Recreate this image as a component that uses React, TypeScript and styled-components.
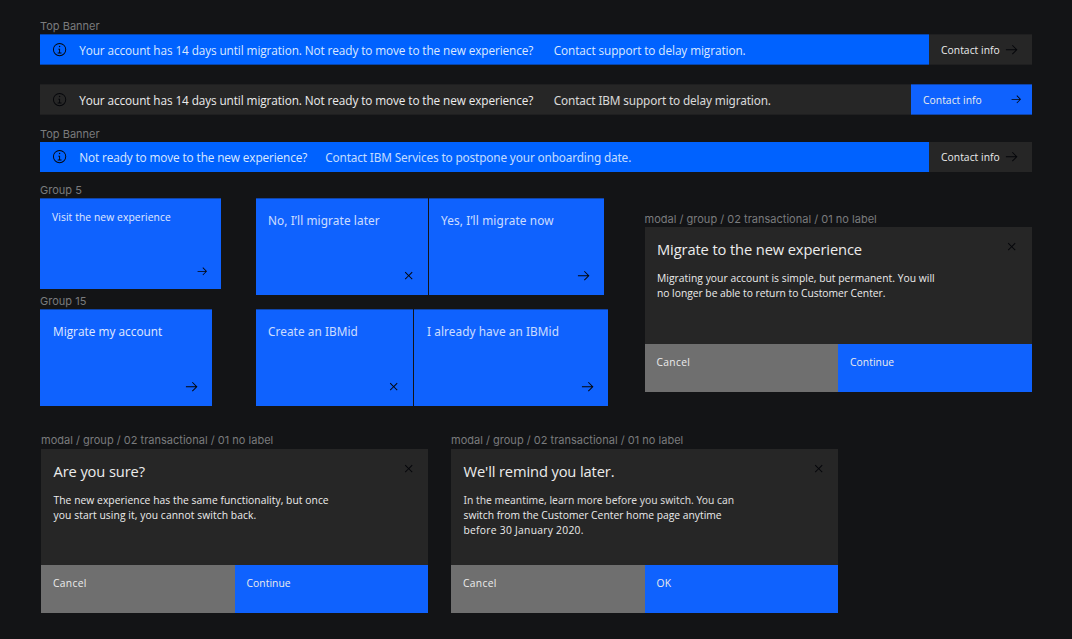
import React from 'react';
import styled, { createGlobalStyle } from 'styled-components';

const color = {
  canvas: '#131416',
  brand: '#0062ff',
  action: '#0f62fe',
  surface: '#262626',
  secondary: '#6f6f6f',
  label: '#7a7b7d',
  icon: '#05060a',
};

const softEdge = 'rgba(19, 20, 22, 0.36)';

const GlobalStyle = createGlobalStyle`
  * { box-sizing: border-box; }
  html, body { margin: 0; background: ${color.canvas}; }
  body { font-family: 'Open Sans', 'Noto Sans', sans-serif; overflow: hidden; }
  h2, p { margin: 0; font-weight: 400; }
  button { font: inherit; border: 0; margin: 0; text-align: left; }
`;

const Canvas = styled.main`
  width: 1072px;
  height: 639px;
  padding: 19px 40px 0;
  display: flex;
  flex-direction: column;
  background: ${color.canvas};
`;

const FrameLabel = styled.div<{ $before?: number }>`
  height: 15px;
  margin-top: ${p => p.$before ?? 0}px;
  line-height: 14px;
  font-family: Inter, sans-serif;
  font-size: 11px;
  letter-spacing: 0.01px;
  color: ${color.label};
  white-space: nowrap;
`;

const Text = styled.span<{ $ls?: number; $serifI?: boolean }>`
  font-family: ${p => (p.$serifI ? "'Noto Sans', sans-serif" : "'Open Sans', sans-serif")};
  letter-spacing: ${p => p.$ls ?? 0}px;
  opacity: ${p => (p.$serifI ? 0.9 : 1)};
  white-space: nowrap;
`;

/* ---- icons ---- */
const Glyph = styled.svg<{ $size: number }>`
  width: ${p => p.$size}px;
  height: ${p => p.$size}px;
  fill: ${color.icon};
  display: block;
  flex: none;
`;

const ArrowRight = ({ size = 15.4 }: { size?: number }) => (
  <Glyph $size={size} viewBox="0 0 32 32">
    <path d="M18 6l-1.43 1.39L24.15 15H4v2h20.15l-7.58 7.57L18 26l10-10z" />
  </Glyph>
);
const Close = () => (
  <Glyph $size={15.4} viewBox="0 0 32 32">
    <path d="M24 9.4L22.6 8 16 14.6 9.4 8 8 9.4 14.6 16 8 22.6 9.4 24 16 17.4 22.6 24 24 22.6 17.4 16z" />
  </Glyph>
);
const Information = () => (
  <Glyph $size={15.2} viewBox="0 0 32 32">
    <path d="M17 22v-8h-4v2h2v6h-3v2h8v-2zM16 8a1.5 1.5 0 1 0 1.5 1.5A1.5 1.5 0 0 0 16 8z" />
    <path d="M16 30a14 14 0 1 1 14-14 14 14 0 0 1-14 14zm0-26a12 12 0 1 0 12 12A12 12 0 0 0 16 4z" />
  </Glyph>
);

/* ---- banners ---- */
const BannerMessage = styled.div<{ $tone: 'brand' | 'surface' }>`
  flex: 1;
  display: flex;
  align-items: center;
  padding-left: 12px;
  background: ${p => color[p.$tone]};
  color: ${p => (p.$tone === 'brand' ? '#dbe8ff' : '#ececec')};
  font-size: 11.8px;
  line-height: 16px;
`;

const BannerText = styled.div<{ $gap: number }>`
  display: flex;
  gap: ${p => p.$gap}px;
  margin-left: 12px;
  padding-top: 1px;
`;

const ContactButton = styled.button<{ $primary?: boolean }>`
  width: ${p => (p.$primary ? 121 : 103)}px;
  display: flex;
  align-items: center;
  justify-content: space-between;
  padding: 0 ${p => (p.$primary ? 9 : 12.6)}px 0 12px;
  background: ${p => (p.$primary ? color.action : color.surface)};
  color: #ececec;
  font-size: 10.3px;
  line-height: 16px;
`;

const Banner = styled.section<{ $gap?: number; $short?: boolean }>`
  width: 992px;
  height: ${p => (p.$short ? 30 : 31)}px;
  display: flex;
  margin-bottom: ${p => p.$gap ?? 0}px;

  ${BannerMessage}, ${ContactButton} {
    box-shadow: ${p => (p.$short ? 'none' : `inset 0 1px ${softEdge}, inset 0 -1px ${softEdge}`)};
  }
  ${BannerText} {
    padding-top: ${p => (p.$short ? 0 : 1)}px;
  }
`;

/* ---- tiles ---- */
const Board = styled.div`
  display: grid;
  grid-template-columns: 216px 388.5px 1fr;
  height: 250px;
`;
const Column = styled.div`
  display: flex;
  flex-direction: column;
`;
const PairColumn = styled(Column)`
  padding-top: 15px;
  gap: 14px;
`;
const ModalColumn = styled(Column)`
  padding-top: 29px;
`;
const TilePair = styled.div`
  display: flex;
  gap: 1px;
`;
const Tile = styled.button<{ $w: number; $compact?: boolean; $left?: number; $right?: number }>`
  width: ${p => p.$w}px;
  height: ${p => (p.$compact ? 91 : 97)}px;
  display: flex;
  flex-direction: column;
  justify-content: space-between;
  padding: ${p => (p.$compact ? '11px' : '14px')} ${p => p.$right ?? 12}px ${p => (p.$compact ? 11.5 : 12)}px ${p => p.$left ?? 12}px;
  background: ${color.action};
  box-shadow: inset 0 1px ${softEdge};
  color: #e0eaff;
  font-size: ${p => (p.$compact ? 10.3 : 11.8)}px;
  line-height: 16px;

  svg { align-self: flex-end; }
`;

/* ---- modals ---- */
const ModalFrame = styled.article`
  width: 387px;
  display: flex;
  flex-direction: column;
`;
const ModalBody = styled.div<{ $h: number }>`
  height: ${p => p.$h}px;
  padding: 12px 12px 0 12.5px;
  display: flex;
  justify-content: space-between;
  align-items: flex-start;
  background: ${color.surface};
  color: #ececec;
`;
const ModalTitle = styled.h2`
  font-size: 14.7px;
  line-height: 20px;
`;
const ModalCopy = styled.p`
  margin-top: 12px;
  font-size: 10.3px;
  line-height: 15.2px;
  display: flex;
  flex-direction: column;
`;
const ModalActions = styled.div`
  display: flex;
  height: 48px;
`;
const ModalButton = styled.button<{ $primary?: boolean }>`
  flex: 1;
  display: flex;
  align-items: flex-start;
  padding: 10px 12px;
  background: ${p => (p.$primary ? color.action : color.secondary)};
  color: #ececec;
  font-size: 10.3px;
  line-height: 16px;
`;
const ModalRow = styled.div`
  display: flex;
  gap: 23px;
  padding-left: 1px;

  ${FrameLabel} { height: 16px; }
`;

type Line = { text: string; ls: number; serifI?: boolean };
type ModalProps = { title: Line; copy: Line[]; confirm: Line; bodyHeight?: number };

const Modal = ({ title, copy, confirm, bodyHeight = 116 }: ModalProps) => (
  <ModalFrame>
    <FrameLabel>modal / group / 02 transactional / 01 no label</FrameLabel>
    <ModalBody $h={bodyHeight}>
      <div>
        <ModalTitle><Text $ls={title.ls}>{title.text}</Text></ModalTitle>
        <ModalCopy>
          {copy.map(l => <Text key={l.text} $ls={l.ls} $serifI={l.serifI}>{l.text}</Text>)}
        </ModalCopy>
      </div>
      <Close />
    </ModalBody>
    <ModalActions>
      <ModalButton><Text $ls={0.3}>Cancel</Text></ModalButton>
      <ModalButton $primary><Text $ls={confirm.ls}>{confirm.text}</Text></ModalButton>
    </ModalActions>
  </ModalFrame>
);

export default function App() {
  return (
    <>
      <GlobalStyle />
      <Canvas>
        <FrameLabel>Top Banner</FrameLabel>
        <Banner $gap={19}>
          <BannerMessage $tone="brand">
            <Information />
            <BannerText $gap={20.5}>
              <Text $ls={-0.104}>Your account has 14 days until migration. Not ready to move to the new experience?</Text>
              <Text $ls={-0.09}>Contact support to delay migration.</Text>
            </BannerText>
          </BannerMessage>
          <ContactButton><Text $ls={0.05}>Contact info</Text><ArrowRight /></ContactButton>
        </Banner>
        <Banner $gap={12}>
          <BannerMessage $tone="surface">
            <Information />
            <BannerText $gap={20.5}>
              <Text $ls={-0.104}>Your account has 14 days until migration. Not ready to move to the new experience?</Text>
              <Text $ls={-0.14} $serifI>Contact IBM support to delay migration.</Text>
            </BannerText>
          </BannerMessage>
          <ContactButton $primary><Text $ls={0.05}>Contact info</Text><ArrowRight size={12.6} /></ContactButton>
        </Banner>
        <FrameLabel>Top Banner</FrameLabel>
        <Banner $gap={11} $short>
          <BannerMessage $tone="brand">
            <Information />
            <BannerText $gap={18}>
              <Text $ls={-0.115}>Not ready to move to the new experience?</Text>
              <Text $ls={-0.145} $serifI>Contact IBM Services to postpone your onboarding date.</Text>
            </BannerText>
          </BannerMessage>
          <ContactButton><Text $ls={0.05}>Contact info</Text><ArrowRight /></ContactButton>
        </Banner>

        <Board>
          <Column>
            <FrameLabel>Group 5</FrameLabel>
            <Tile $w={181} $compact>
              <Text $ls={0.09}>Visit the new experience</Text>
              <ArrowRight size={12.6} />
            </Tile>
            <FrameLabel $before={5}>Group 15</FrameLabel>
            <Tile $w={172} $left={13} $right={12.8}>
              <Text $ls={0.026}>Migrate my account</Text>
              <ArrowRight />
            </Tile>
          </Column>
          <PairColumn>
            <TilePair>
              <Tile $w={172}><Text $ls={0.1} $serifI>No, I’ll migrate later</Text><Close /></Tile>
              <Tile $w={175} $right={12.8}><Text $ls={0.134} $serifI>Yes, I’ll migrate now</Text><ArrowRight /></Tile>
            </TilePair>
            <TilePair>
              <Tile $w={157}><Text $ls={0.06} $serifI>Create an IBMid</Text><Close /></Tile>
              <Tile $w={194} $left={13} $right={13}><Text $ls={0.077} $serifI>I already have an IBMid</Text><ArrowRight /></Tile>
            </TilePair>
          </PairColumn>
          <ModalColumn>
            <Modal
              title={{ text: 'Migrate to the new experience', ls: -0.12 }}
              copy={[
                { text: 'Migrating your account is simple, but permanent. You will', ls: 0.04 },
                { text: 'no longer be able to return to Customer Center.', ls: -0.02 },
              ]}
              confirm={{ text: 'Continue', ls: 0.066 }}
              bodyHeight={117}
            />
          </ModalColumn>
        </Board>

        <ModalRow>
          <Modal
            title={{ text: 'Are you sure?', ls: -0.119 }}
            copy={[
              { text: 'The new experience has the same functionality, but once', ls: 0.049 },
              { text: 'you start using it, you cannot switch back.', ls: 0.076 },
            ]}
            confirm={{ text: 'Continue', ls: 0.066 }}
          />
          <Modal
            title={{ text: "We'll remind you later.", ls: -0.13 }}
            copy={[
              { text: 'In the meantime, learn more before you switch. You can', ls: 0, serifI: true },
              { text: 'switch from the Customer Center home page anytime', ls: 0.01 },
              { text: 'before 30 January 2020.', ls: 0.27 },
            ]}
            confirm={{ text: 'OK', ls: 0.22 }}
          />
        </ModalRow>
      </Canvas>
    </>
  );
}
